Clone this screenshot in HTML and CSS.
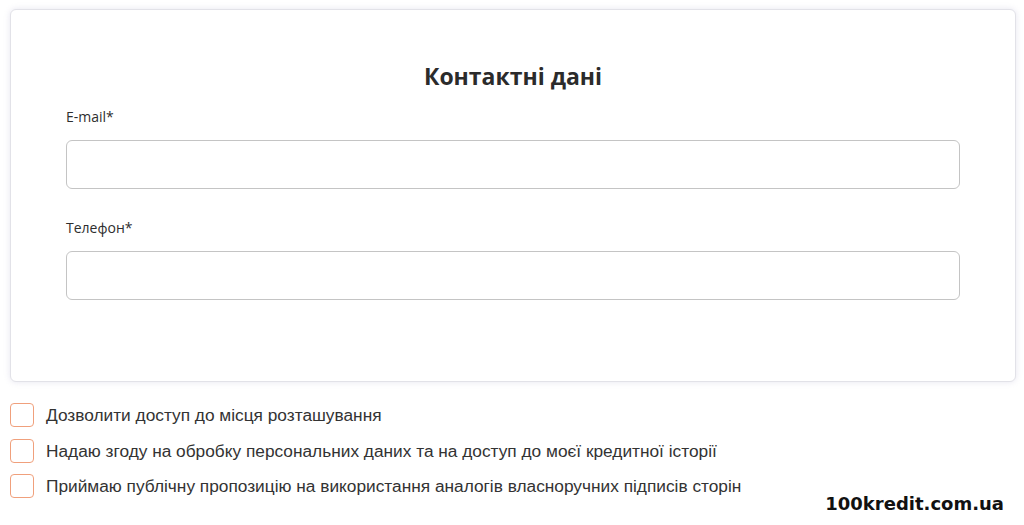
FILE: index.html
```html
<!DOCTYPE html>
<html lang="uk">

<head>
    <meta charset="UTF-8">
    <meta name="viewport" content="width=device-width, initial-scale=1.0">
    <title>Контактні дані</title>
    <link rel="stylesheet" href="styles.css">
</head>

<body>

    <div class="card">
        <h1>Контактні дані</h1>

        <label class="field-label" for="email">E-mail*</label>
        <input type="email" id="email" class="field-input">

        <label class="field-label" for="phone">Телефон*</label>
        <input type="tel" id="phone" class="field-input">
    </div>

    <div class="agreements">
        <label class="check-row">
            <span class="check-box"></span>
            Дозволити доступ до місця розташування
        </label>
        <label class="check-row">
            <span class="check-box"></span>
            Надаю згоду на обробку персональних даних та на доступ до моєї кредитної історії
        </label>
        <label class="check-row">
            <span class="check-box"></span>
            Приймаю публічну пропозицію на використання аналогів власноручних підписів сторін
        </label>
    </div>

    <div class="watermark">100kredit.com.ua</div>

</body>

</html>
```

FILE: styles.css
```css
body {
    margin: 0;
    padding: 9px 8px 0 10px;
    background: #fff;
    font-family: "Liberation Sans", Arial, sans-serif;
    color: #333;
}

.card {
    background: #fff;
    border: 1px solid #e2e2e8;
    border-radius: 6px;
    box-shadow: 0 0 6px rgba(200, 198, 220, 0.45);
    padding: 50px 55px 81px 55px;
    display: flex;
    flex-direction: column;
}

.card h1 {
    margin: 0 0 15px;
    text-align: center;
    font-family: "Open Sans", sans-serif;
    font-size: 23px;
    font-weight: 700;
    color: #2b2b2b;
    line-height: 32px;
}

.field-label {
    font-family: "Open Sans", sans-serif;
    font-size: 14px;
    line-height: 20px;
    color: #2e2e2e;
    margin-bottom: 13px;
}

.field-input {
    height: 49px;
    box-sizing: border-box;
    border: 1px solid #c4c4c4;
    border-radius: 6px;
    margin: 0 0 29px;
    padding: 0 14px;
    font-size: 16px;
}

.field-input:last-child {
    margin-bottom: 0;
}

.agreements {
    margin-top: 20px;
    display: flex;
    flex-direction: column;
    gap: 9.5px;
}

.check-row {
    display: flex;
    align-items: center;
    gap: 12px;
    font-size: 17.3px;
    line-height: 26px;
    color: #333;
}

.check-box {
    width: 24px;
    height: 24px;
    box-sizing: border-box;
    border: 1.5px solid #f0a07c;
    border-radius: 4px;
    flex-shrink: 0;
}

.watermark {
    text-align: right;
    margin: -6px 12px 0 0;
    font-family: "DejaVu Sans", sans-serif;
    font-weight: 700;
    font-size: 18px;
    color: #111;
}
```
